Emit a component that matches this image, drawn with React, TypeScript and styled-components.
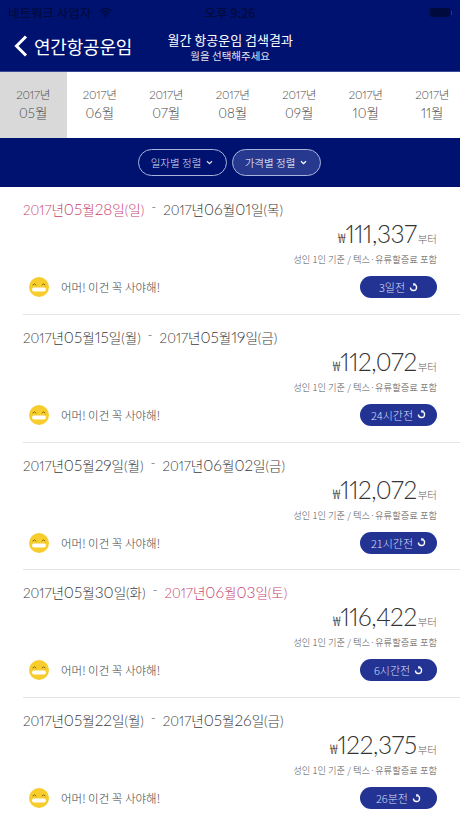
import React from "react";
import styled, { createGlobalStyle } from "styled-components";

const Global = createGlobalStyle`
  html, body { margin: 0; padding: 0; background: #fff; }
  body { font-family: "Lato", "Noto Sans CJK KR", sans-serif; font-weight: 300; font-feature-settings: "pnum"; }
  * { box-sizing: border-box; }
`;
const Page = styled.div`width: 460px; height: 818px; overflow: hidden; background: #fff; display: flex; flex-direction: column;`;
const Header = styled.header`height: 72px; background: #001270; border-bottom: 1px solid #3a4a94; display: flex; flex-direction: column; flex: none;`;
const StatusBar = styled.div`height: 25px; padding: 0 8px 0 8px; display: grid; grid-template-columns: 1fr auto 1fr; align-items: center; color: #000a3c; font: 500 12.5px "Noto Sans CJK KR", sans-serif;`;
const StatusLeft = styled.div`display: flex; align-items: center; gap: 8px;`;
const StatusRight = styled.div`display: flex; justify-content: flex-end; align-items: center; gap: 1px;`;
const Battery = styled.span`width: 20px; height: 9px; border-radius: 2px; background: #000a3c; display: block;`;
const BatteryTip = styled.span`width: 1.5px; height: 4px; background: #2a3680; display: block;`;
const NavRow = styled.div`flex: 1; display: flex; align-items: flex-start; position: relative;`;
const Back = styled.div`display: flex; align-items: center; gap: 6px; margin: 8px 0 0 14px; color: #fff;`;
const BackLabel = styled.span`font: 400 18px "Noto Sans CJK KR", sans-serif; line-height: 26px; letter-spacing: -0.2px;`;
const NavTitle = styled.div`margin: 5px 0 0 33px; width: 130px; display: flex; flex-direction: column; align-items: center; color: #fff; font-family: "Noto Sans CJK KR", sans-serif;`;
const TitleMain = styled.span`font-size: 13px; font-weight: 400; line-height: 19px; white-space: nowrap;`;
const TitleSub = styled.span`font-size: 10.5px; font-weight: 400; line-height: 14px; color: #e0e4f2; white-space: nowrap;`;
const Months = styled.nav`height: 66px; display: flex; flex: none; background: #fff;`;
const Month = styled.div<{ $active?: boolean }>`
  width: 66.5px; flex: none; background: ${p => (p.$active ? "#d9d9d9" : "transparent")};
  display: flex; flex-direction: column; align-items: center; justify-content: center; color: #4c4c4c;
`;
const MonthYear = styled.span`font-size: 11.5px; line-height: 18px; letter-spacing: -0.2px;`;
const MonthName = styled.span`font-size: 13.5px; line-height: 19px; margin-bottom: 1px;`;
const SortBar = styled.div`height: 49px; background: #001270; display: flex; justify-content: center; align-items: center; gap: 5px; flex: none; padding-right: 2px;`;
const SortButton = styled.div<{ $active?: boolean }>`
  width: 89px; height: 27px; border-radius: 14px; border: 1px solid #a9b3dc;
  background: ${p => (p.$active ? "#27388f" : "transparent")};
  color: ${p => (p.$active ? "#fff" : "#d6dbee")};
  display: flex; align-items: center; justify-content: center; gap: 5px;
  font: 300 10.5px "Noto Sans CJK KR", sans-serif;
`;
const List = styled.main`flex: 1; display: flex; flex-direction: column;`;
const Row = styled.article`height: 127.8px; flex: none; margin-left: 23px; padding: 10px 23px 0 0; border-bottom: 1px solid #e4e4e4; display: flex; flex-direction: column; &:last-child { border-bottom: none; }`;
const Dates = styled.div`height: 24px; display: flex; align-items: center; font-size: 13.5px; color: #3c3c3c; white-space: nowrap;`;
const DatePart = styled.span<{ $holiday?: boolean }>`color: ${p => (p.$holiday ? "#c93f70" : "#3c3c3c")};`;
const Num = styled.span`font-size: 15.5px; font-weight: 300;`;
const Dash = styled.span`margin: 0 7px; color: #555; position: relative; top: -2px;`;
const PriceLine = styled.div`height: 30px; margin-top: -2px; display: flex; justify-content: flex-end; align-items: baseline; color: #333;`;
const Won = styled.span`font: 300 14px "Noto Sans CJK KR", sans-serif;`;
const Amount = styled.span`font-size: 24.5px; line-height: 30px; letter-spacing: -0.4px;`;
const Unit = styled.span`font-size: 10.5px; color: #666; margin-left: 1px;`;
const Meta = styled.div`margin-top: 2px; height: 16px; text-align: right; font: 300 9.3px/16px "Noto Sans CJK KR", sans-serif; color: #555;`;
const Bottom = styled.div`margin-top: 8px; height: 24px; display: flex; align-items: center;`;
const Emoji = styled.svg`width: 20px; height: 20px; margin-left: 6px; flex: none;`;
const Msg = styled.span`margin-left: 12px; flex: 1; font: 300 11.5px "Noto Sans CJK KR", sans-serif; color: #444;`;
const Ago = styled.div`width: 77px; height: 22px; border-radius: 11px; background: #233393; color: #d9def3; display: flex; align-items: center; justify-content: center; gap: 4px; font: 300 11px "Noto Sans CJK KR", sans-serif;`;

const Chevron = () => (
  <svg width="7" height="5" viewBox="0 0 7 5"><path d="M1 1.2 3.5 3.6 6 1.2" fill="none" stroke="currentColor" strokeWidth="1.3" /></svg>
);
const Refresh = () => (
  <svg width="9" height="9" viewBox="0 0 10 10"><path d="M1.6 5a3.4 3.4 0 1 0 3.8-3.4" fill="none" stroke="#fff" strokeWidth="1.5" /><path d="M7.6 .9 5 3.6 4.6 0z" fill="#fff" /></svg>
);
const Face = () => (
  <Emoji viewBox="0 0 20 20">
    <circle cx="10" cy="10" r="10" fill="#f7cd2e" />
    <path d="M3.6 8.2Q5.4 5.4 7.2 8.2M12.8 8.2Q14.6 5.4 16.4 8.2" fill="none" stroke="#8a6a12" strokeWidth="1" />
    <rect x="3" y="10.4" width="14" height="4" rx="2" fill="#fff" />
  </Emoji>
);

const months = [["2017년", "05월"], ["2017년", "06월"], ["2017년", "07월"], ["2017년", "08월"], ["2017년", "09월"], ["2017년", "10월"], ["2017년", "11월"]];
type D = { m: string; d: string; w: string; h?: boolean };
const rows: { a: D; b: D; price: string; ago: string }[] = [
  { a: { m: "05", d: "28", w: "일", h: true }, b: { m: "06", d: "01", w: "목" }, price: "111,337", ago: "3일전" },
  { a: { m: "05", d: "15", w: "월" }, b: { m: "05", d: "19", w: "금" }, price: "112,072", ago: "24시간전" },
  { a: { m: "05", d: "29", w: "월" }, b: { m: "06", d: "02", w: "금" }, price: "112,072", ago: "21시간전" },
  { a: { m: "05", d: "30", w: "화" }, b: { m: "06", d: "03", w: "토", h: true }, price: "116,422", ago: "6시간전" },
  { a: { m: "05", d: "22", w: "월" }, b: { m: "05", d: "26", w: "금" }, price: "122,375", ago: "26분전" },
];
const DateText = ({ v }: { v: D }) => (
  <DatePart $holiday={v.h}>2017년<Num>{v.m}</Num>월<Num>{v.d}</Num>일({v.w})</DatePart>
);

export default function App() {
  return (
    <Page>
      <Global />
      <Header>
        <StatusBar>
          <StatusLeft>
            <span>네트워크 사업자</span>
            <svg width="13" height="10" viewBox="0 0 13 10"><path d="M.5 3.2a8.5 8.5 0 0 1 12 0M2.5 5.2a5.6 5.6 0 0 1 8 0M4.5 7.2a2.8 2.8 0 0 1 4 0" fill="none" stroke="#000a3c" strokeWidth="1.3" /><circle cx="6.5" cy="8.8" r="1" fill="#000a3c" /></svg>
          </StatusLeft>
          <span>오후 9:26</span>
          <StatusRight><Battery /><BatteryTip /></StatusRight>
        </StatusBar>
        <NavRow>
          <Back>
            <svg width="14" height="22" viewBox="0 0 14 22"><path d="M12 1.5 2.5 11 12 20.5" fill="none" stroke="#fff" strokeWidth="3" /></svg>
            <BackLabel>연간항공운임</BackLabel>
          </Back>
          <NavTitle>
            <TitleMain>월간 항공운임 검색결과</TitleMain>
            <TitleSub>월을 선택해주세요</TitleSub>
          </NavTitle>
        </NavRow>
      </Header>
      <Months>
        {months.map((m, i) => (
          <Month key={m[1]} $active={i === 0}>
            <MonthYear>{m[0]}</MonthYear>
            <MonthName>{m[1]}</MonthName>
          </Month>
        ))}
      </Months>
      <SortBar>
        <SortButton>일자별 정렬 <Chevron /></SortButton>
        <SortButton $active>가격별 정렬 <Chevron /></SortButton>
      </SortBar>
      <List>
        {rows.map(r => (
          <Row key={r.price + r.ago}>
            <Dates><DateText v={r.a} /><Dash>-</Dash><DateText v={r.b} /></Dates>
            <PriceLine><Won>₩</Won><Amount>{r.price}</Amount><Unit>부터</Unit></PriceLine>
            <Meta>성인 1인 기준 / 텍스·유류할증료 포함</Meta>
            <Bottom>
              <Face />
              <Msg>어머! 이건 꼭 사야해!</Msg>
              <Ago>{r.ago} <Refresh /></Ago>
            </Bottom>
          </Row>
        ))}
      </List>
    </Page>
  );
}
